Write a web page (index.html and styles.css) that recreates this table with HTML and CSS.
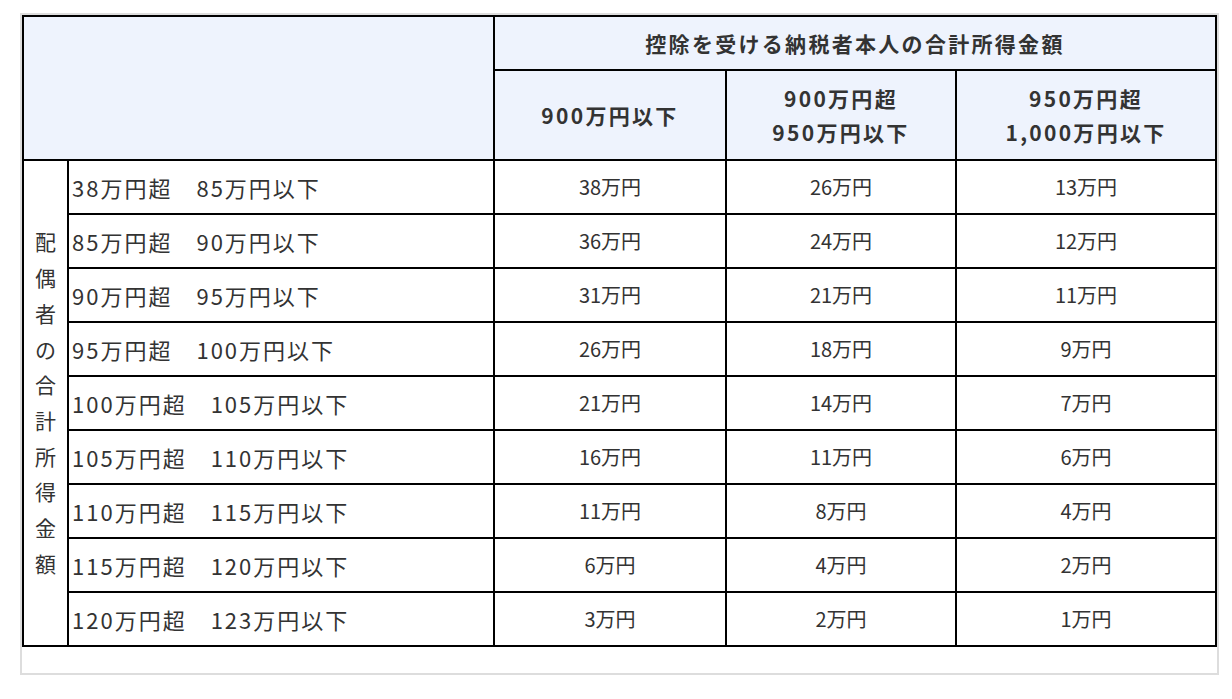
FILE: index.html
```html
<!DOCTYPE html>
<html lang="ja">
<head>
<meta charset="utf-8">
<title>配偶者特別控除</title>
<link rel="stylesheet" href="styles.css">
</head>
<body>
<div class="wrap">
  <table class="tbl">
    <colgroup>
      <col class="c-side">
      <col class="c-range">
      <col class="c-a">
      <col class="c-b">
      <col class="c-c">
    </colgroup>
    <thead>
      <tr class="h1">
        <th class="blank" colspan="2" rowspan="2"></th>
        <th colspan="3">控除を受ける納税者本人の合計所得金額</th>
      </tr>
      <tr class="h2">
        <th>900万円以下</th>
        <th>900万円超<br>950万円以下</th>
        <th>950万円超<br>1,000万円以下</th>
      </tr>
    </thead>
    <tbody>
      <tr>
        <td class="side" rowspan="9"><span class="vert">配偶者の合計所得金額</span></td>
        <td class="range">38万円超　85万円以下</td>
        <td class="val">38万円</td><td class="val">26万円</td><td class="val">13万円</td>
      </tr>
      <tr>
        <td class="range">85万円超　90万円以下</td>
        <td class="val">36万円</td><td class="val">24万円</td><td class="val">12万円</td>
      </tr>
      <tr>
        <td class="range">90万円超　95万円以下</td>
        <td class="val">31万円</td><td class="val">21万円</td><td class="val">11万円</td>
      </tr>
      <tr>
        <td class="range">95万円超　100万円以下</td>
        <td class="val">26万円</td><td class="val">18万円</td><td class="val">9万円</td>
      </tr>
      <tr>
        <td class="range">100万円超　105万円以下</td>
        <td class="val">21万円</td><td class="val">14万円</td><td class="val">7万円</td>
      </tr>
      <tr>
        <td class="range">105万円超　110万円以下</td>
        <td class="val">16万円</td><td class="val">11万円</td><td class="val">6万円</td>
      </tr>
      <tr>
        <td class="range">110万円超　115万円以下</td>
        <td class="val">11万円</td><td class="val">8万円</td><td class="val">4万円</td>
      </tr>
      <tr>
        <td class="range">115万円超　120万円以下</td>
        <td class="val">6万円</td><td class="val">4万円</td><td class="val">2万円</td>
      </tr>
      <tr>
        <td class="range">120万円超　123万円以下</td>
        <td class="val">3万円</td><td class="val">2万円</td><td class="val">1万円</td>
      </tr>
    </tbody>
  </table>
</div>
</body>
</html>
```

FILE: styles.css
```css
html, body {
  margin: 0;
  padding: 0;
  background: #ffffff;
}

body {
  font-family: "Noto Sans CJK JP", "Noto Sans", sans-serif;
  color: #333333;
}

.wrap {
  box-sizing: border-box;
  width: 1199px;
  margin: 13px 0 0 20px;
  border: 2px solid #dddddd;
  padding-bottom: 26px;
}

.tbl {
  width: 1195px;
  border-collapse: collapse;
  table-layout: fixed;
}

.c-side { width: 45px; }
.c-range { width: 426px; }
.c-a { width: 232px; }
.c-b { width: 230px; }
.c-c { width: 260px; }

.tbl th,
.tbl td {
  border: 2px solid #000000;
  padding: 0;
}

.tbl th {
  background: #eef3fd;
  font-weight: bold;
  font-size: 21px;
  letter-spacing: 2.3px;
  line-height: 34px;
  text-align: center;
  color: #333333;
}

.h1 th { height: 52px; }
.h2 th { height: 88px; }

.tbl td {
  height: 52px;
  font-size: 20px;
  line-height: 28px;
  vertical-align: middle;
}

.tbl td.range {
  font-size: 22px;
  letter-spacing: 2px;
  padding-left: 3px;
  text-align: left;
  white-space: nowrap;
}

.val {
  text-align: center;
  padding-left: 4px;
}

.side {
  text-align: center;
}

.vert {
  display: block;
  width: 1em;
  margin: 0 auto;
  font-size: 21px;
  line-height: 35.7px;
  word-break: break-all;
}
```
